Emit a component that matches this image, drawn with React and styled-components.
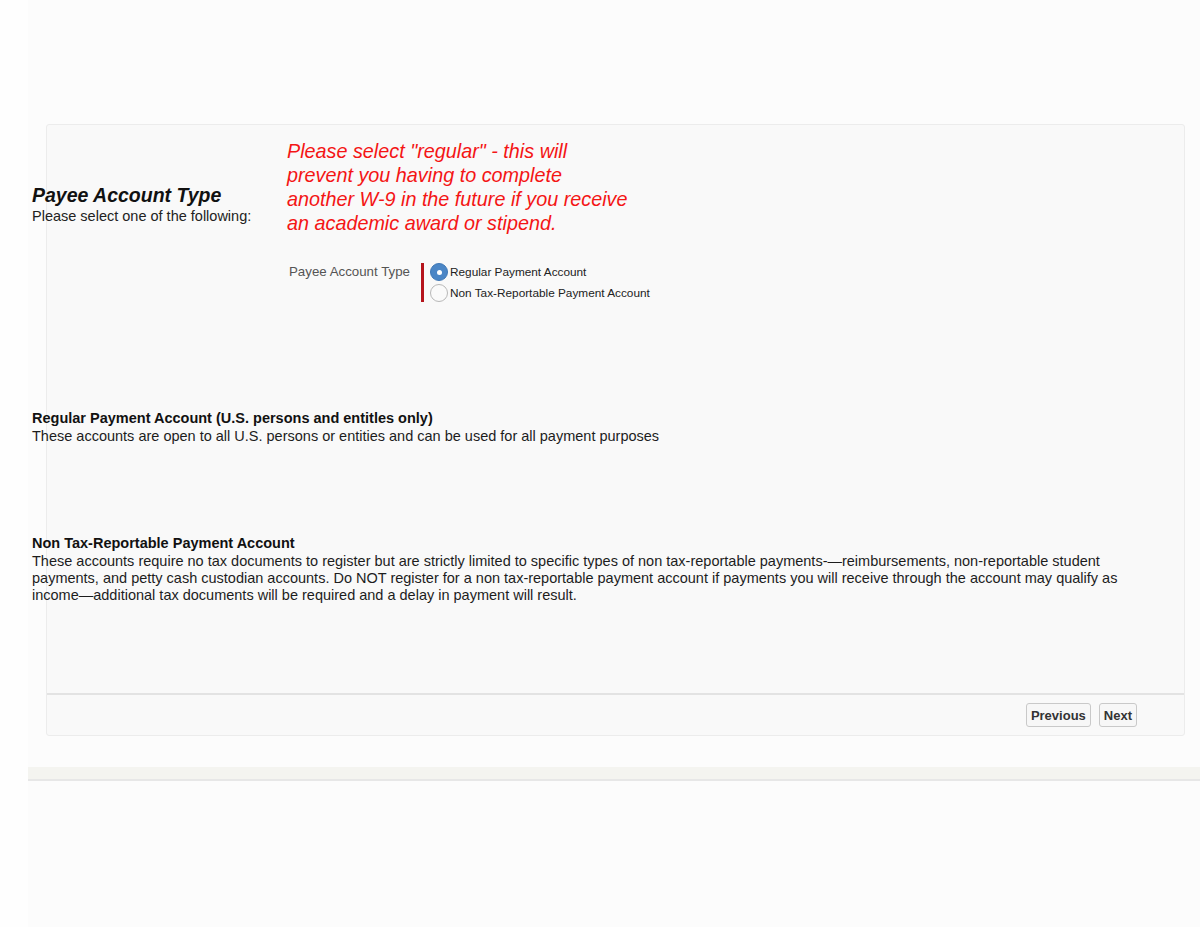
import React from "react";
import styled, { createGlobalStyle } from "styled-components";

const GlobalStyle = createGlobalStyle`
  body {
    margin: 0;
    background: #fefefe;
    font-family: "Liberation Sans", Arial, sans-serif;
    color: #1a1a1a;
  }
`;

const Page = styled.div`
  margin-left: 28px;
  min-height: 927px;
  padding-top: 124px;
  box-sizing: border-box;
  background: #fcfcfc;
`;

const Panel = styled.div`
  margin-left: 18px;
  width: 1139px;
  box-sizing: border-box;
  border: 1px solid #ececec;
  border-radius: 3px;
  background: #f9f9f9;
`;

const PanelBody = styled.div`
  height: 568px;
  padding-top: 14px;
  box-sizing: border-box;
`;

const Content = styled.div`
  margin-left: -15px;
`;

const IntroRow = styled.div`
  display: flex;
`;

const IntroText = styled.div`
  width: 255px;
  margin-top: 45px;
`;

const Title = styled.div`
  font-size: 19.5px;
  font-weight: bold;
  font-style: italic;
  line-height: 22px;
  color: #111;
`;

const SubTitle = styled.div`
  font-size: 14.5px;
  line-height: 18px;
  margin-top: 1px;
  color: #222;
`;

const Note = styled.div`
  font-size: 19.8px;
  font-style: italic;
  line-height: 24px;
  color: #f41515;
`;

const NoteLine = styled.div`
  white-space: nowrap;
`;

const FormRow = styled.div`
  display: flex;
  margin: 28px 0 0 257px;
`;

const FieldLabel = styled.div`
  width: 132px;
  font-size: 13.3px;
  color: #555;
  padding-top: 1px;
`;

const RadioGroup = styled.div`
  display: flex;
  flex-direction: column;
  gap: 3px;
  border-left: 3px solid #b5141c;
  padding-left: 6px;
`;

const RadioRow = styled.label`
  display: flex;
  align-items: center;
  gap: 2px;
  font-size: 11.8px;
  color: #222;
  height: 18px;
`;

const Radio = styled.span`
  width: 18px;
  height: 18px;
  box-sizing: border-box;
  border-radius: 50%;
  display: flex;
  align-items: center;
  justify-content: center;
  background: ${(p) => (p.checked ? "#4b86c6" : "#fafafa")};
  border: 1px solid ${(p) => (p.checked ? "#3f78b6" : "#b8b8b8")};
  &::after {
    content: "";
    width: 5px;
    height: 5px;
    border-radius: 50%;
    background: #fff;
    display: ${(p) => (p.checked ? "block" : "none")};
  }
`;

const Section = styled.div`
  margin-top: ${(p) => p.top}px;
  width: 1120px;
`;

const SectionTitle = styled.div`
  font-size: 14.5px;
  font-weight: bold;
  line-height: 17px;
  color: #111;
`;

const SectionText = styled.div`
  font-size: 14.5px;
  line-height: 17px;
  margin-top: 1px;
  color: #1d1d1d;
`;

const Footer = styled.div`
  height: 40px;
  border-top: 2px solid #e3e3e3;
  display: flex;
  align-items: center;
  justify-content: flex-end;
  gap: 8px;
  padding-right: 47px;
`;

const Button = styled.button`
  height: 24px;
  padding: 0 4px;
  font-family: "Liberation Sans", Arial, sans-serif;
  font-size: 13px;
  font-weight: bold;
  color: #333;
  background: #f7f7f7;
  border: 1px solid #c9c9c9;
  border-radius: 3px;
  cursor: pointer;
`;

const BottomBar = styled.div`
  margin-top: 31px;
  height: 12px;
  background: #f4f4f0;
  border-bottom: 2px solid #e7e7e7;
`;

export default function App() {
  return (
    <>
      <GlobalStyle />
      <Page>
        <Panel>
          <PanelBody>
            <Content>
              <IntroRow>
                <IntroText>
                  <Title>Payee Account Type</Title>
                  <SubTitle>Please select one of the following:</SubTitle>
                </IntroText>
                <Note>
                  <NoteLine>Please select "regular" - this will</NoteLine>
                  <NoteLine>prevent you having to complete</NoteLine>
                  <NoteLine>another W-9 in the future if you receive</NoteLine>
                  <NoteLine>an academic award or stipend.</NoteLine>
                </Note>
              </IntroRow>

              <FormRow>
                <FieldLabel>Payee Account Type</FieldLabel>
                <RadioGroup>
                  <RadioRow>
                    <Radio checked />
                    Regular Payment Account
                  </RadioRow>
                  <RadioRow>
                    <Radio />
                    Non Tax-Reportable Payment Account
                  </RadioRow>
                </RadioGroup>
              </FormRow>

              <Section top={108}>
                <SectionTitle>Regular Payment Account (U.S. persons and entitles only)</SectionTitle>
                <SectionText>
                  These accounts are open to all U.S. persons or entities and can be used for all payment purposes
                </SectionText>
              </Section>

              <Section top={90}>
                <SectionTitle>Non Tax-Reportable Payment Account</SectionTitle>
                <SectionText>
                  These accounts require no tax documents to register but are strictly limited to specific types
                  of non tax-reportable payments-—reimbursements, non-reportable student payments, and petty cash
                  custodian accounts. Do NOT register for a non tax-reportable payment account if payments you will
                  receive through the account may qualify as income—additional tax documents will be required and a
                  delay in payment will result.
                </SectionText>
              </Section>
            </Content>
          </PanelBody>
          <Footer>
            <Button>Previous</Button>
            <Button>Next</Button>
          </Footer>
        </Panel>
        <BottomBar />
      </Page>
    </>
  );
}
